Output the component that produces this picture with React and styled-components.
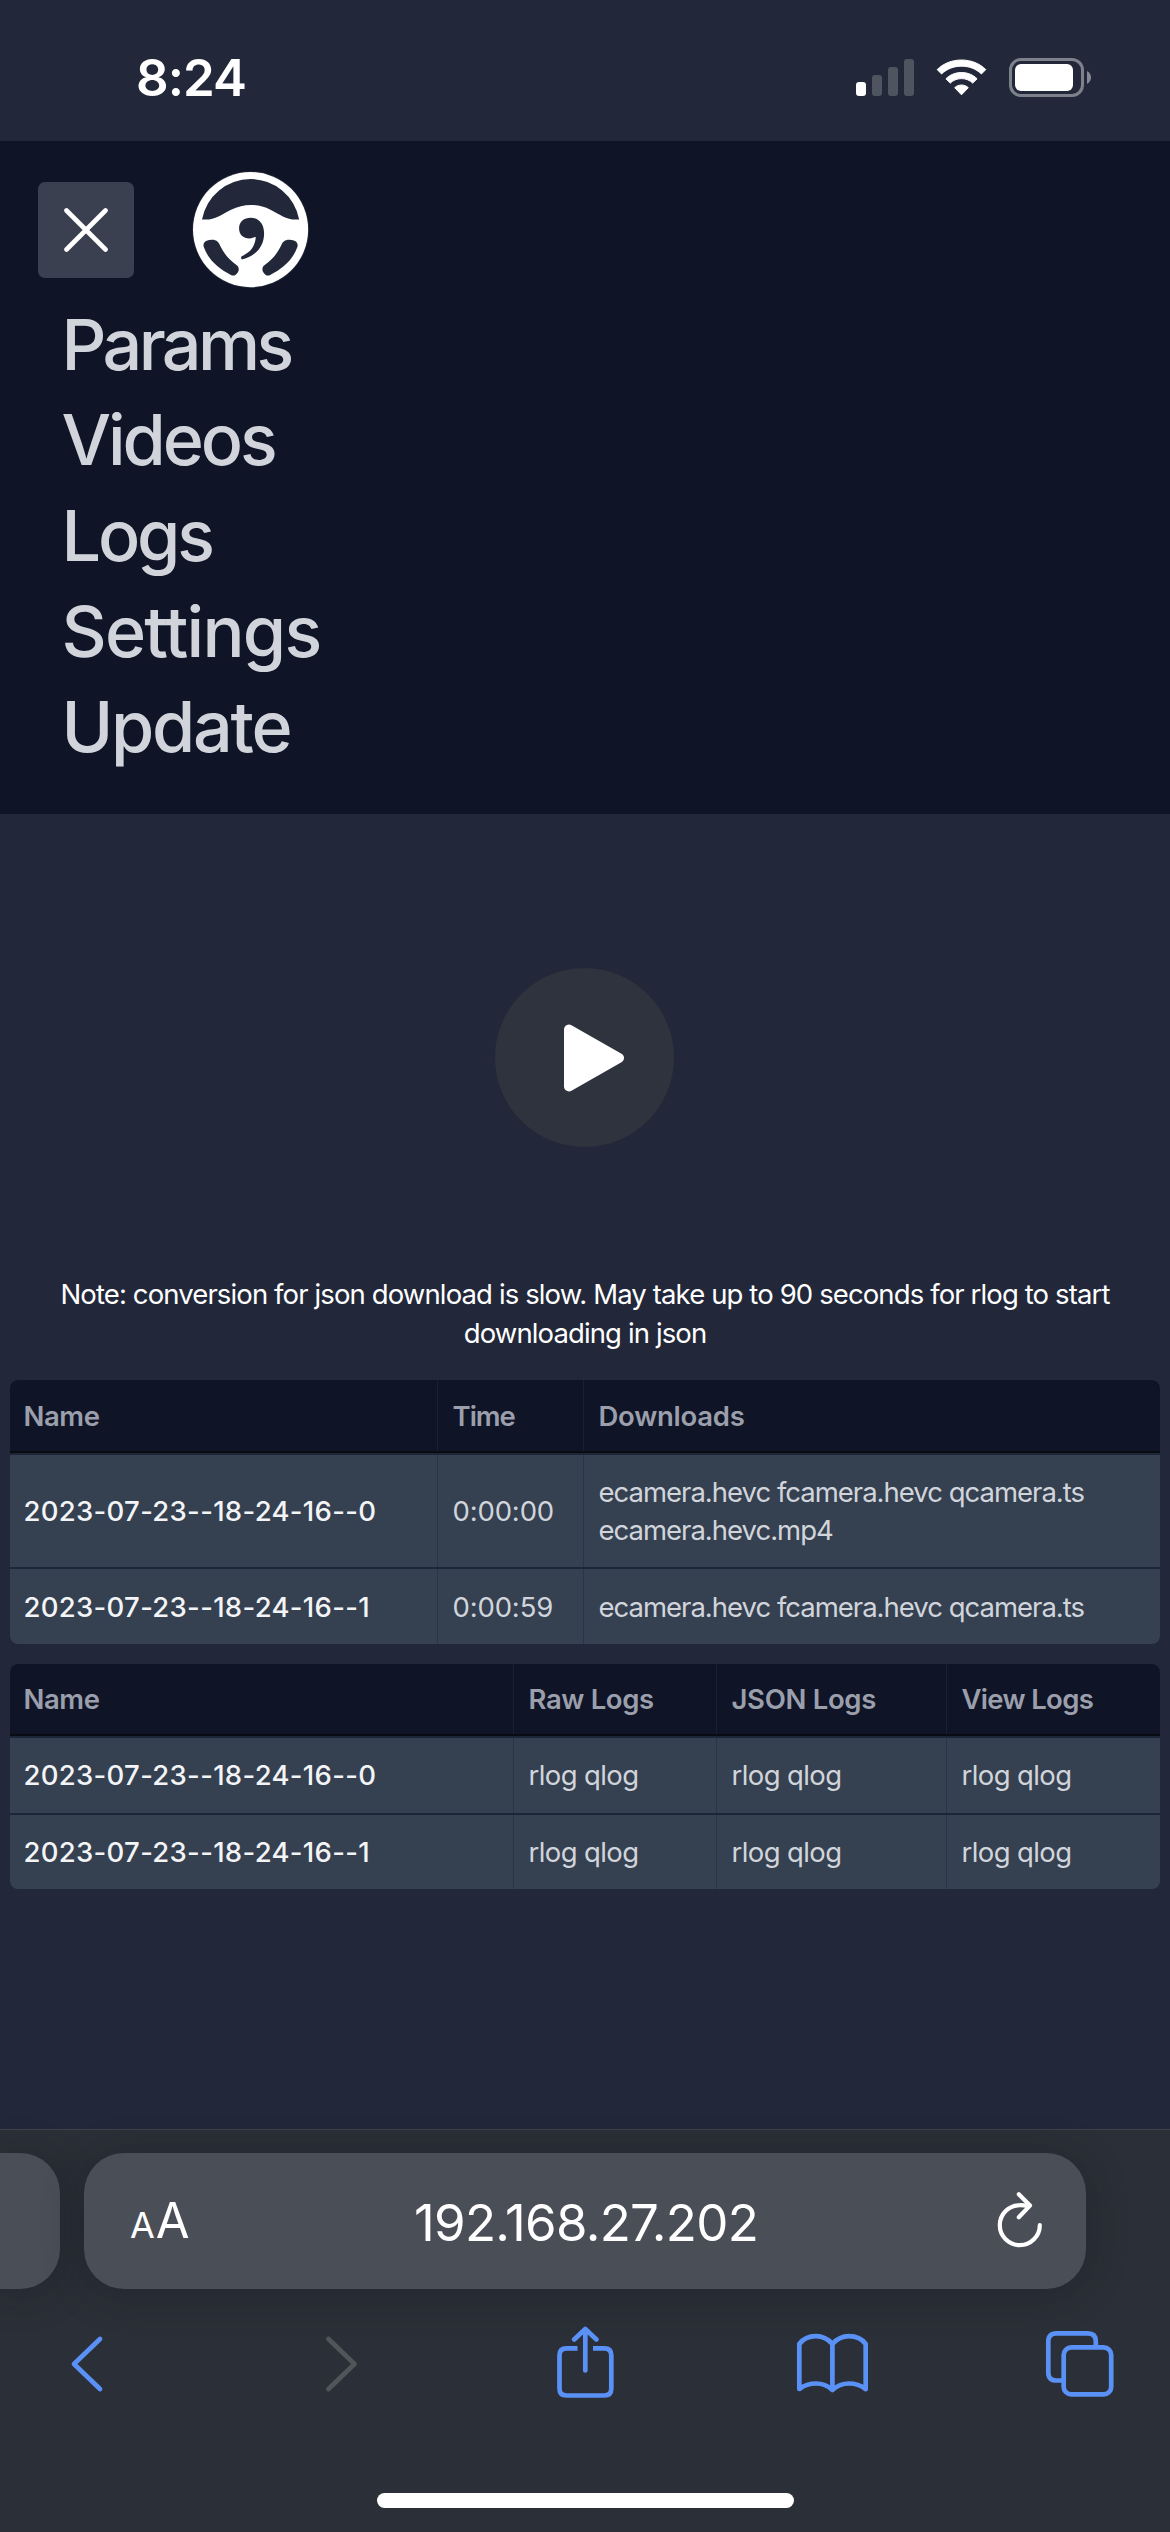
import React from 'react';
import styled, { createGlobalStyle, css } from 'styled-components';

const color = {
  page: '#222839',
  nav: '#0f1526',
  row: '#354051',
  toolbar: '#2b2f37',
  field: '#4a4e57',
  blue: '#5a91f7',
};

const GlobalStyle = createGlobalStyle`
  * { box-sizing: border-box; }
  body { margin: 0; background: ${color.page}; }
`;

const Screen = styled.div`
  width: 1170px;
  height: 2532px;
  display: flex;
  flex-direction: column;
  overflow: hidden;
  background: ${color.page};
  color: #fff;
  font-family: Inter, 'Liberation Sans', sans-serif;
  font-size: 27.5px;
`;

const StatusBar = styled.header`
  flex: none;
  height: 141px;
  padding: 14px 79px 0 136px;
  display: flex;
  align-items: center;
  justify-content: space-between;
`;

const Clock = styled.time`
  font-size: 51px;
  font-weight: 600;
  line-height: 60px;
  letter-spacing: -0.96px;
`;

const StatusIcons = styled.div`
  display: flex;
  align-items: center;
  gap: 22px;
`;

const Icon = styled.svg`
  display: block;
  flex: none;
`;

const Nav = styled.nav`
  flex: none;
  height: 673px;
  padding-top: 30px;
  background: ${color.nav};
`;

const NavTop = styled.div`
  display: flex;
  align-items: center;
  height: 117px;
  padding-left: 38px;
  gap: 58px;
`;

const CloseButton = styled.button`
  display: grid;
  place-items: center;
  width: 96px;
  height: 96px;
  padding: 0;
  border: 0;
  border-radius: 7px;
  background: #3b4050;
`;

const NavList = styled.ul`
  list-style: none;
  margin: 8.8px 0 0;
  padding: 0 0 0 61.5px;
`;

const NavItem = styled.li`
  height: 95.6px;
  line-height: 95.4px;
  font-size: 70px;
  font-weight: 500;
  color: #d1d5db;
  letter-spacing: ${(p) => p.$track}px;
`;

const Player = styled.section`
  flex: none;
  height: 461px;
  padding-top: 154px;
  display: flex;
  justify-content: center;
`;

const PlayButton = styled.button`
  width: 179px;
  height: 179px;
  padding: 0 0 0 19px;
  margin-right: 2px;
  border: 0;
  border-radius: 50%;
  background: #2e333d;
  display: grid;
  place-items: center;
`;

const Note = styled.p`
  flex: none;
  margin: 0 auto 27px;
  width: 1080px;
  text-align: center;
  line-height: 39px;
  letter-spacing: -0.88px;
`;

const Table = styled.section`
  flex: none;
  margin: 0 10px 20px;
  border-radius: 8px;
  overflow: hidden;
  background: ${color.row};
`;

const columns = {
  videos: '428px 146px 1fr',
  logs: '504px 203px 230px 1fr',
};

const Row = styled.div`
  display: grid;
  grid-template-columns: ${(p) => columns[p.$layout]};
  height: ${(p) => p.$height}px;
  ${(p) =>
    p.$head
      ? css`
          background: ${color.nav};
          border-bottom: 2px solid #0a0c13;
          color: #9b9fac;
          font-weight: 600;
          --rule: #192032;
        `
      : css`
          --rule: #2a3446;
          color: #d1d5db;
          & + & {
            border-top: 2px solid #1c2638;
          }
        `}
`;

const Cell = styled.div`
  display: flex;
  align-items: center;
  padding: 0 14px 0 ${(p) => (p.$first ? 13.5 : 14.5)}px;
  line-height: 38px;
  letter-spacing: ${(p) => p.$track ?? 0}px;
  border-right: 1px solid var(--rule);
  white-space: pre-line;
  &:last-child {
    border-right: 0;
  }
  ${(p) =>
    p.$name &&
    css`
      color: #f3f4f6;
      font-weight: 500;
      letter-spacing: 0.3px;
    `}
`;

const Browser = styled.footer`
  flex: none;
  margin-top: auto;
  height: 403px;
  background: ${color.toolbar};
  border-top: 1px solid #3f444b;
  display: flex;
  flex-direction: column;
`;

const Addresses = styled.div`
  display: flex;
  height: 136px;
  margin-top: 23px;
  gap: 24px;
`;

const PreviousTab = styled.div`
  width: 60px;
  border-radius: 0 40px 40px 0;
  background: ${color.field};
  box-shadow: 0 4px 40px rgba(20, 23, 32, 0.32);
`;

const AddressField = styled.div`
  display: grid;
  grid-template-columns: 284px 1fr 46px;
  align-items: center;
  width: 1002px;
  padding: 0 43px 0 46px;
  border-radius: 40px;
  background: ${color.field};
  box-shadow: 0 4px 40px rgba(20, 23, 32, 0.32);
`;

const TextSize = styled.div`
  display: flex;
  align-items: baseline;
  gap: 2px;
  padding-top: 3px;
  line-height: 60px;
`;

const Letter = styled.span`
  font-size: ${(p) => p.$size}px;
  letter-spacing: -1px;
`;

const Address = styled.div`
  padding-top: 3px;
  font-size: 51px;
  letter-spacing: -0.7px;
  line-height: 60px;
`;

const Actions = styled.div`
  display: flex;
  justify-content: space-between;
  margin-top: 37px;
  padding: 0 54px 0 52px;
`;

const HomeIndicator = styled.div`
  width: 417px;
  height: 15px;
  margin: auto auto 24px 377px;
  border-radius: 8px;
  background: #fff;
`;

const Cellular = () => (
  <Icon width="58" height="37" fill="#4f5461">
    <rect x="0" y="23" width="10" height="14" rx="3" fill="#fff" />
    <rect x="16" y="16" width="10" height="21" rx="3" />
    <rect x="32" y="8" width="10" height="29" rx="3" />
    <rect x="48" y="0" width="10" height="37" rx="3" />
  </Icon>
);

const Wifi = () => (
  <Icon width="51" height="37" viewBox="0 0 51 37" fill="#fff" stroke="#fff" strokeLinejoin="round">
    <path d="M25.5 1C15.8 1 7 4.700 1.200 10.600L5.600 15C10.800 9.900 17.800 7.200 25.500 7.200S40.200 9.900 45.400 15L49.800 10.600C44 4.700 35.200 1 25.500 1Z" />
    <path d="M25.500 13.500C19.300 13.500 13.800 15.900 9.900 19.800L14.300 24.100C17.200 21.300 21.100 19.600 25.500 19.600S33.800 21.300 36.700 24.100L41.100 19.800C37.200 15.900 31.700 13.500 25.500 13.500Z" />
    <path d="M25.500 26C22.800 26 20.500 27 18.700 28.700L25.500 35.800L32.300 28.700C30.500 27 28.200 26 25.500 26Z" />
  </Icon>
);

const Battery = () => (
  <Icon width="82" height="39" viewBox="0 0 82 39">
    <rect x="1.500" y="1.500" width="72" height="36" rx="10.500" fill="none" stroke="#7d818c" strokeWidth="3" />
    <rect x="6" y="6" width="58" height="27" rx="6" fill="#fff" />
    <path d="M78 13C80.600 14.500 82 16.700 82 19.500S80.600 24.500 78 26Z" fill="#858994" />
  </Icon>
);

const CloseIcon = () => (
  <Icon width="44" height="44" viewBox="0 0 44 44" stroke="#fff" strokeWidth="4.600" strokeLinecap="round">
    <path d="M2.500 2.500L41.500 41.500M41.500 2.500L2.500 41.500" />
  </Icon>
);

const wheelSlot =
  'M101 290C98 277 108 270 124 269C138 268 145 275 149 284C160 308 175 328 200 345C207 350 208 360 203 367C198 374 192 379 184 375C145 355 115 330 101 290Z';

const WheelLogo = () => (
  <Icon width="117" height="117" viewBox="66 63 350.500 350.500" fill={color.page}>
    <circle cx="241.500" cy="238.500" r="175" />
    <circle cx="241.500" cy="238.500" r="172.500" fill="#fff" />
    <path d="M96 208A148 148 0 0 1 387 208C352 212 331 194 301 179C262 160 222 160 183 179C152 195 132 212 96 208Z" />
    <path d="M207 235C207 215 222 203 242 203C266 203 282 222 282 250C282 288 258 318 215 328Q212 323 214 319C241 307 255 290 257 261C252 260 247 265 238 265C219 265 207 252 207 235Z" />
    <path d={wheelSlot} />
    <path d={wheelSlot} transform="matrix(-1 0 0 1 483 0)" />
  </Icon>
);

const PlayIcon = () => (
  <Icon width="60" height="68" viewBox="0 0 60 68" fill="#fff" stroke="#fff" strokeWidth="10" strokeLinejoin="round">
    <path d="M5 5.500V62.500L55 34Z" />
  </Icon>
);

const ReloadIcon = () => (
  <Icon width="46" height="60" viewBox="0 0 46 60" fill="none" stroke="#fff" strokeWidth="4.200" strokeLinecap="round" strokeLinejoin="round">
    <path d="M42.800 34.200A20 20 0 1 1 22.800 14.200Q27 14.100 31 15.200" />
    <path d="M21.800 3.300L33 14.600L21.800 26.300" />
  </Icon>
);

const Action = ({ children, tint = color.blue }) => (
  <Icon width="72" height="74" viewBox="0 0 72 74" fill="none" stroke={tint} strokeWidth="4.700" strokeLinecap="round" strokeLinejoin="round">
    {children}
  </Icon>
);

const navItems = [
  ['Params', -3.6],
  ['Videos', -3.1],
  ['Logs', -3.2],
  ['Settings', -1.75],
  ['Update', -2.25],
];

const videoRows = [
  { name: '2023-07-23--18-24-16--0', time: '0:00:00', files: 'ecamera.hevc fcamera.hevc qcamera.ts\necamera.hevc.mp4', height: 114 },
  { name: '2023-07-23--18-24-16--1', time: '0:00:59', files: 'ecamera.hevc fcamera.hevc qcamera.ts', height: 77 },
];

const logRows = ['2023-07-23--18-24-16--0', '2023-07-23--18-24-16--1'];

export default function App() {
  return (
    <>
      <GlobalStyle />
      <Screen>
        <StatusBar>
          <Clock>8:24</Clock>
          <StatusIcons>
            <Cellular />
            <Wifi />
            <Battery />
          </StatusIcons>
        </StatusBar>

        <Nav>
          <NavTop>
            <CloseButton aria-label="Close menu">
              <CloseIcon />
            </CloseButton>
            <WheelLogo />
          </NavTop>
          <NavList>
            {navItems.map(([label, track]) => (
              <NavItem key={label} $track={track}>
                {label}
              </NavItem>
            ))}
          </NavList>
        </Nav>

        <Player>
          <PlayButton aria-label="Play">
            <PlayIcon />
          </PlayButton>
        </Player>

        <Note>Note: conversion for json download is slow. May take up to 90 seconds for rlog to start downloading in json</Note>

        <Table>
          <Row $head $layout="videos" $height={73}>
            <Cell $first $track={-0.4}>Name</Cell>
            <Cell $track={-1}>Time</Cell>
            <Cell $track={-0.25}>Downloads</Cell>
          </Row>
          {videoRows.map((row) => (
            <Row key={row.name} $layout="videos" $height={row.height}>
              <Cell $first $name>{row.name}</Cell>
              <Cell $track={-0.15}>{row.time}</Cell>
              <Cell $track={-1}>{row.files}</Cell>
            </Row>
          ))}
        </Table>

        <Table>
          <Row $head $layout="logs" $height={72}>
            <Cell $first $track={-0.4}>Name</Cell>
            <Cell $track={-0.37}>Raw Logs</Cell>
            <Cell $track={-0.32}>JSON Logs</Cell>
            <Cell $track={-0.67}>View Logs</Cell>
          </Row>
          {logRows.map((name) => (
            <Row key={name} $layout="logs" $height={76.5}>
              <Cell $first $name>{name}</Cell>
              <Cell $track={-0.6}>rlog qlog</Cell>
              <Cell $track={-0.6}>rlog qlog</Cell>
              <Cell $track={-0.6}>rlog qlog</Cell>
            </Row>
          ))}
        </Table>

        <Browser>
          <Addresses>
            <PreviousTab />
            <AddressField>
              <TextSize>
                <Letter $size={36}>A</Letter>
                <Letter $size={49}>A</Letter>
              </TextSize>
              <Address>192.168.27.202</Address>
              <ReloadIcon />
            </AddressField>
          </Addresses>
          <Actions>
            <Action>
              <path d="M48 13L22 38L48 63" />
            </Action>
            <Action tint="#515459">
              <path d="M28.500 13L54.500 38L28.500 63" />
            </Action>
            <Action>
              <path d="M29.500 22.300H18.500Q11.500 22.300 11.500 29.300V62.500Q11.500 69.500 18.500 69.500H56.300Q63.300 69.500 63.300 62.500V29.300Q63.300 22.300 56.300 22.300H45" strokeLinecap="butt" />
              <path d="M37.300 44.500V3.500M26.200 13.500L37.300 3L48.400 13.500" />
            </Action>
            <Action>
              <path d="M36.400 18C31.500 12.500 26 10.200 20 10.200C13 10.200 7 13 3.300 18V63C8 59.500 13.500 57.500 20 57.500C26.500 57.500 32 59.800 36.400 64C41 59.800 46.500 57.500 53 57.500C59.500 57.500 65 59.500 69.700 63V18C66 13 60 10.200 53 10.200C47 10.200 41.300 12.500 36.400 18ZM36.400 18V64" />
            </Action>
            <Action>
              <path d="M19.500 54.500H12.300Q4.300 54.500 4.300 46.500V15.300Q4.300 7.300 12.300 7.300H43.800Q51.800 7.300 51.800 15.300V21" strokeLinecap="butt" />
              <rect x="19.700" y="21.400" width="47.500" height="47" rx="7.500" />
            </Action>
          </Actions>
          <HomeIndicator />
        </Browser>
      </Screen>
    </>
  );
}
